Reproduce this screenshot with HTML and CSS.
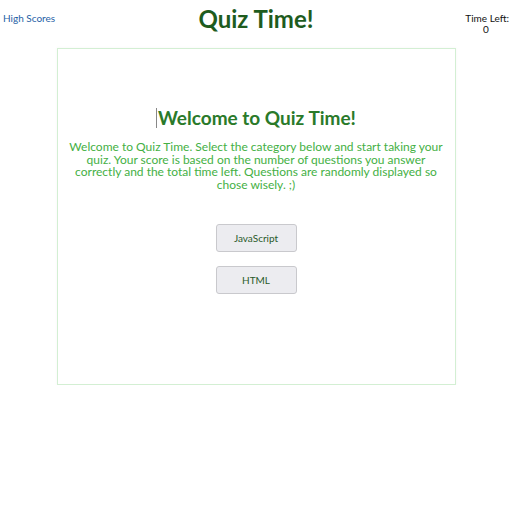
FILE: index.html
```html
<!DOCTYPE html>
<html>
<head>
<meta charset="utf-8">
<link rel="stylesheet" href="styles.css">
</head>
<body>
<header class="topbar">
  <a class="scores-link" href="#">High Scores</a>
  <h1 class="title">Quiz Time!</h1>
  <div class="timer"><div class="timer-label">Time Left:</div><div class="timer-value">0</div></div>
</header>
<main class="card">
  <h2 class="welcome"><span class="caret"></span>Welcome to Quiz Time!</h2>
  <p class="intro">Welcome to Quiz Time. Select the category below and start taking your quiz. Your score is based on the number of questions you answer correctly and the total time left. Questions are randomly displayed so chose wisely. ;)</p>
  <div class="choices">
    <button class="choice">JavaScript</button>
    <button class="choice">HTML</button>
  </div>
</main>
</body>
</html>
```
FILE: styles.css
```css
html, body {
  margin: 0;
  padding: 0;
  background: #fff;
}
body {
  font-family: "Lato", "Open Sans", sans-serif;
}
.topbar {
  display: flex;
  justify-content: space-between;
  align-items: flex-start;
  height: 48px;
  padding: 0 3px;
}
.scores-link {
  color: #1f5fa6;
  text-decoration: none;
  font-size: 10px;
  margin-top: 12px;
  width: 80px;
}
.title {
  margin: 4px 0 0;
  font-size: 24px;
  font-weight: 700;
  color: #1e5c1e;
}
.timer {
  width: 80px;
  display: flex;
  flex-direction: column;
  align-items: flex-end;
  font-size: 10px;
  line-height: 11px;
  margin-top: 13px;
  color: #111;
}
.timer-label {
  text-align: center;
}
.timer-value {
  width: 46px;
  text-align: center;
}
.card {
  width: 399px;
  height: 337px;
  margin: 0 auto;
  border: 1px solid #d3efd3;
  box-shadow: 0 0 3px rgba(0,0,0,0.04);
  display: flex;
  flex-direction: column;
  align-items: center;
  padding-top: 58px;
  box-sizing: border-box;
}
.welcome {
  margin: 0;
  font-size: 19px;
  font-weight: 700;
  color: #2a7a2a;
  line-height: 22px;
  display: flex;
  align-items: center;
}
.caret {
  display: inline-block;
  width: 1px;
  height: 20px;
  background: #888;
  margin-right: 1px;
}
.intro {
  margin: 12px 0 0;
  width: 375px;
  text-align: center;
  font-size: 12px;
  line-height: 12.5px;
  color: #44b044;
}
.choices {
  display: flex;
  flex-direction: column;
  gap: 14px;
  margin-top: 33px;
}
.choice {
  width: 81px;
  height: 28px;
  background: #ececf0;
  border: 1px solid #c9c9cd;
  border-radius: 3px;
  color: #2a5a2a;
  font-family: "Lato", sans-serif;
  font-size: 10px;
  padding: 0;
}
```
